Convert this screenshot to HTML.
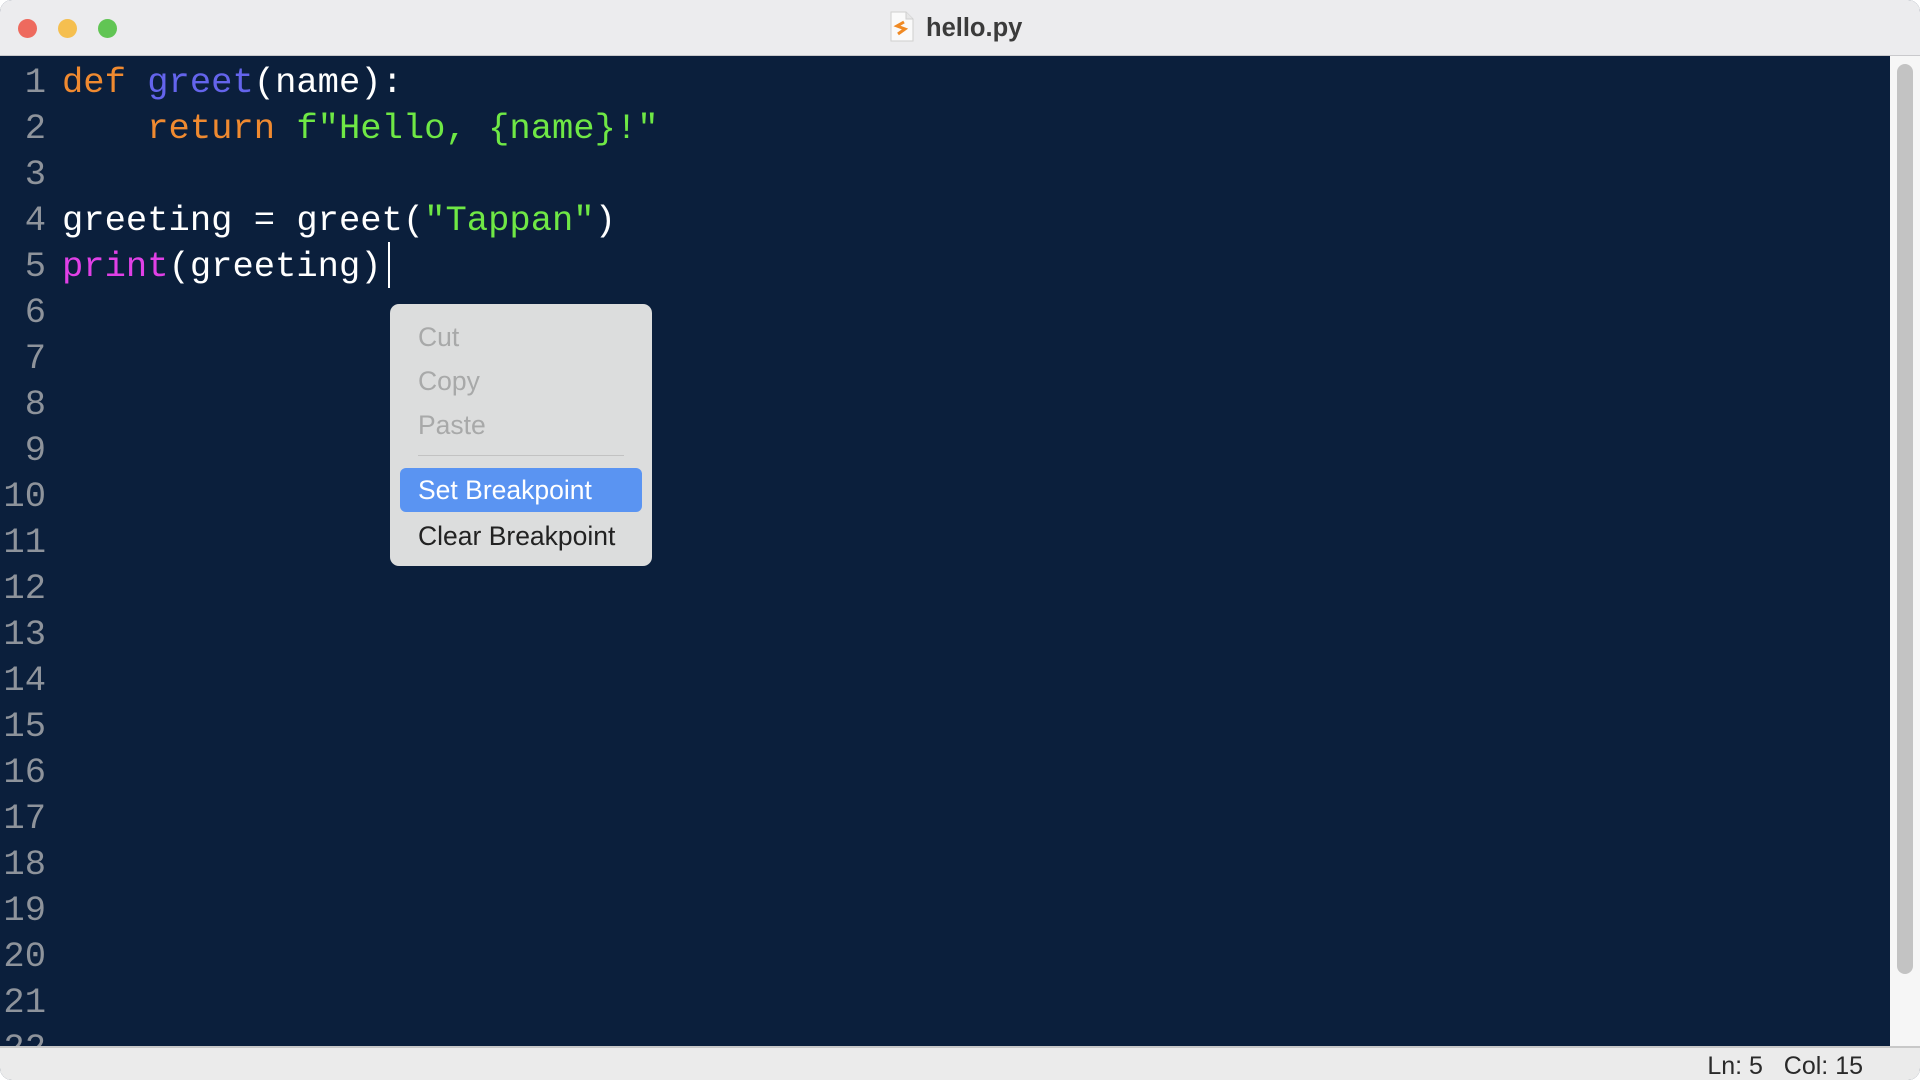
<!DOCTYPE html>
<html><head><meta charset="utf-8"><style>
*{margin:0;padding:0;box-sizing:border-box}
html,body{width:1920px;height:1080px;overflow:hidden;background:#fff}
.win{position:absolute;left:0;top:0;width:1920px;height:1080px;border-radius:12px;overflow:hidden;background:#0b1f3c}
.title{position:absolute;left:0;top:0;width:1920px;height:56px;background:#ececee;border-bottom:1px solid #c9c9cc}
.dot{position:absolute;top:19px;width:19px;height:19px;border-radius:50%}
.ttl{position:absolute;left:926px;top:14px;font:bold 25.5px "Liberation Sans",sans-serif;color:#3b3b3b}
#ed{position:absolute;left:0;top:56px;width:1890px;height:990px;overflow:hidden;font-family:"Liberation Mono",monospace;font-size:35.5px}
.ln{position:absolute;height:46px;line-height:46px;white-space:pre}
.num{color:#8e939b;width:46px;text-align:right;left:0}
.menu{position:absolute;left:390px;top:304px;width:262px;height:262px;background:#dcdddd;border-radius:9px;font-family:"Liberation Sans",sans-serif;font-size:26.5px}
.mi{position:absolute;left:28px;line-height:30px}
.status{position:absolute;left:0;top:1046px;width:1920px;height:34px;background:#ebebeb;border-top:2px solid #c8c8c8}
.sb{position:absolute;left:1890px;top:56px;width:30px;height:990px;background:#f6f6f6}
.thumb{position:absolute;left:7px;top:8px;width:16px;height:910px;background:#c3c3c3;border-radius:8px}
</style></head><body>
<div class="win">
<div class="title">
<div class="dot" style="left:18px;background:#ee6a5e"></div>
<div class="dot" style="left:58px;background:#f5bf4f"></div>
<div class="dot" style="left:98px;background:#61c554"></div>
<svg style="position:absolute;left:890px;top:11px" width="24" height="31" viewBox="0 0 24 31"><path d="M1 1h15l7 7v22H1z" fill="#fafafa" stroke="#cfcfcf"/><path d="M16 1v7h7" fill="#e6e6e6" stroke="#cfcfcf"/><path d="M14 11l-7 4 8 3-7 5" fill="none" stroke="#f08a24" stroke-width="3"/></svg>
<div class="ttl">hello.py</div>
</div>
<div id="ed">
<div class="ln num" style="top:4px">1</div>
<div class="ln num" style="top:50px">2</div>
<div class="ln num" style="top:96px">3</div>
<div class="ln num" style="top:142px">4</div>
<div class="ln num" style="top:188px">5</div>
<div class="ln num" style="top:234px">6</div>
<div class="ln num" style="top:280px">7</div>
<div class="ln num" style="top:326px">8</div>
<div class="ln num" style="top:372px">9</div>
<div class="ln num" style="top:418px">10</div>
<div class="ln num" style="top:464px">11</div>
<div class="ln num" style="top:510px">12</div>
<div class="ln num" style="top:556px">13</div>
<div class="ln num" style="top:602px">14</div>
<div class="ln num" style="top:648px">15</div>
<div class="ln num" style="top:694px">16</div>
<div class="ln num" style="top:740px">17</div>
<div class="ln num" style="top:786px">18</div>
<div class="ln num" style="top:832px">19</div>
<div class="ln num" style="top:878px">20</div>
<div class="ln num" style="top:924px">21</div>
<div class="ln num" style="top:970px">22</div>
<div class="ln" style="top:4px;left:62px;color:#fff"><span style="color:#f08a30">def</span> <span style="color:#6464ec">greet</span>(name):</div>
<div class="ln" style="top:50px;left:62px;color:#fff">    <span style="color:#f08a30">return</span> <span style="color:#6fe845">f"Hello, {name}!"</span></div>
<div class="ln" style="top:142px;left:62px;color:#fff">greeting = greet(<span style="color:#6fe845">"Tappan"</span>)</div>
<div class="ln" style="top:188px;left:62px;color:#fff"><span style="color:#e040e6">print</span>(greeting)</div>
<div style="position:absolute;left:388px;top:186px;width:2px;height:46px;background:#fff"></div>
</div>
<div class="sb"><div class="thumb"></div></div>
<div class="menu">
<div class="mi" style="top:18px;color:#a8a9a9">Cut</div>
<div class="mi" style="top:62px;color:#a8a9a9">Copy</div>
<div class="mi" style="top:106px;color:#a8a9a9">Paste</div>
<div style="position:absolute;left:28px;top:151px;width:206px;height:1px;background:#c2c2c2"></div>
<div style="position:absolute;left:10px;top:164px;width:242px;height:44px;background:#5a94f2;border-radius:6px"></div>
<div class="mi" style="top:171px;color:#fff">Set Breakpoint</div>
<div class="mi" style="top:217px;color:#222">Clear Breakpoint</div>
</div>
<div class="status"><div style="position:absolute;right:57px;top:4px;font:25px 'Liberation Sans',sans-serif;color:#2a2a2a;white-space:pre">Ln: 5   Col: 15</div></div>
</div>
</body></html>
